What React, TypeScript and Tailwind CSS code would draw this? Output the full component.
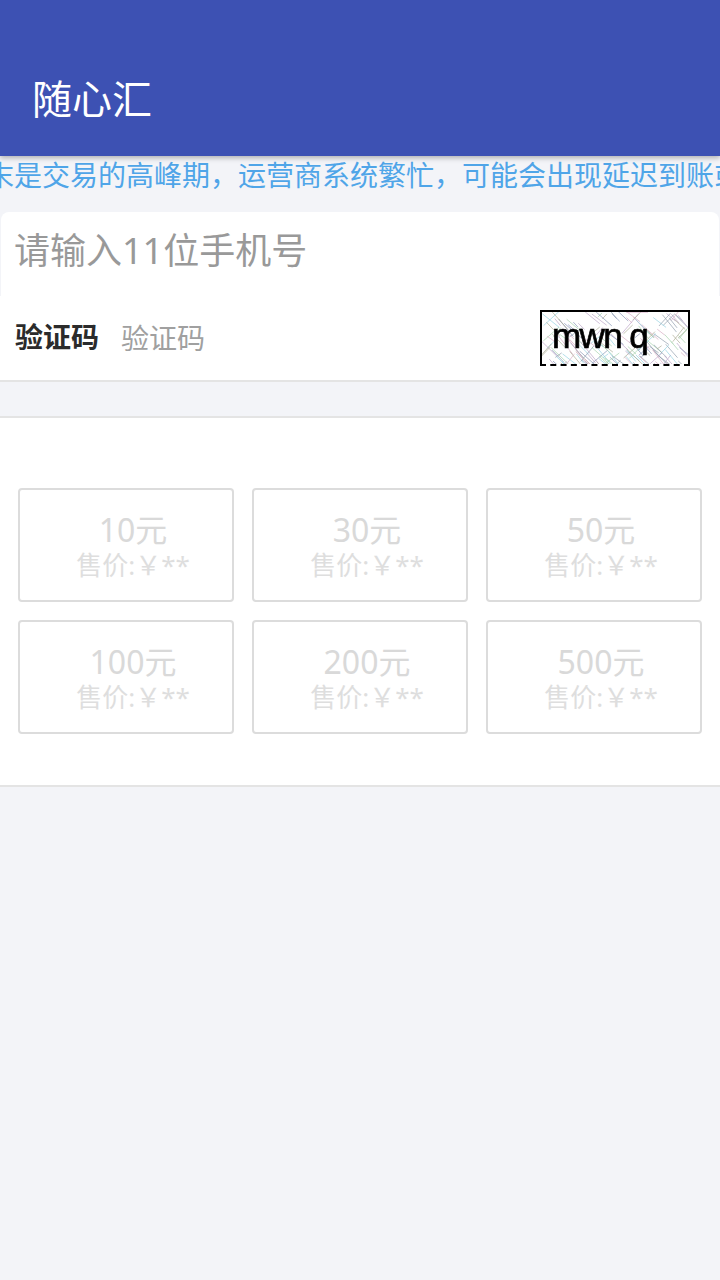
const FONT = "font-['Noto_Sans','Noto_Sans_CJK_SC',sans-serif]";

const items = ["10元", "30元", "50元", "100元", "200元", "500元"];

const COLORS = ["#8a98a8", "#b9a0c4", "#9fcfa8", "#8fd0e0", "#d6a8c0", "#a8a88f", "#7f8fb0"];

function noiseLines() {
  const out: { x1: number; y1: number; x2: number; y2: number; c: string }[] = [];
  let s = 41;
  const r = (n: number) => {
    s = (s * 9301 + 49297) % 233280;
    return (s / 233280) * n;
  };
  for (let i = 0; i < 170; i++) {
    const x1 = r(150);
    const y1 = r(56);
    const dir = r(1) < 0.25 ? -1 : 1;
    const len = 4 + r(14);
    out.push({ x1, y1, x2: x1 + len * dir, y2: y1 + len * (0.7 + r(0.6)), c: COLORS[i % COLORS.length] });
  }
  return out;
}

function Captcha() {
  return (
    <div className="relative w-[150px] h-[56px] border-2 border-black [border-bottom-style:dashed] bg-white overflow-hidden">
      <svg className="absolute -left-[2px] -top-[2px]" width="150" height="56" viewBox="0 0 150 56" fill="none">
        {noiseLines().map((l, i) => (
          <line key={i} x1={l.x1} y1={l.y1} x2={l.x2} y2={l.y2} stroke={l.c} strokeWidth="1" opacity="0.65" />
        ))}
        <path d="M48 0 L66 0 M86 1 L108 1" stroke="#d8a8c8" strokeWidth="3" />
      </svg>
      <span className="absolute left-[10px] top-[4px] text-[35px] leading-[40px] tracking-[-1.6px] text-black [-webkit-text-stroke:0.7px_black] blur-[0.4px] font-['Liberation_Sans',sans-serif] whitespace-pre">
        mwn q
      </span>
    </div>
  );
}

function Card({ label }: { label: string }) {
  return (
    <div className="h-[114px] border-2 border-[#dcdcdc] rounded-[4px] flex flex-col items-center pl-[14px] pt-[21px]">
      <span className="text-[32px] leading-[38px] text-[#d9d9d9]">{label}</span>
      <span className="text-[26px] leading-[32px] text-[#dedede] whitespace-nowrap">售价:￥**</span>
    </div>
  );
}

export default function App() {
  return (
    <div className={`${FONT} min-h-[1280px] bg-[#f3f4f8] overflow-hidden`}>
      <header className="h-[156px] bg-[#3d51b3] shadow-[0_2px_5px_rgba(0,0,0,0.28)] flex items-end pl-[32px] pb-[32px] relative">
        <h1 className="text-[40px] leading-[50px] text-white">随心汇</h1>
      </header>

      <div className="h-[56px] overflow-hidden whitespace-nowrap text-[28px] leading-[36px] text-[#4fa5e8] pt-[1px]">
        <p className="ml-[-14px]">末是交易的高峰期，运营商系统繁忙，可能会出现延迟到账或</p>
      </div>

      <div className="h-[84px] mx-[1px] bg-white rounded-t-[8px] flex items-center pl-[13px] pb-[6px] text-[36px] text-[#999999]">
        请输入11位手机号
      </div>

      <div className="h-[86px] bg-white border-b-2 border-[#e4e4e4] flex items-center justify-between pl-[15px] pr-[30px]">
        <div className="flex items-center">
          <span className="text-[28px] font-bold text-[#2b2b2b] w-[106px] pb-[2px]">验证码</span>
          <span className="text-[28px] text-[#a0a0a0]">验证码</span>
        </div>
        <Captcha />
      </div>

      <section className="mt-[34px] h-[371px] bg-white border-y-2 border-[#e4e4e4] px-[18px] pt-[70px]">
        <div className="grid grid-cols-3 gap-[18px]">
          {items.map((label) => (
            <Card key={label} label={label} />
          ))}
        </div>
      </section>
    </div>
  );
}
